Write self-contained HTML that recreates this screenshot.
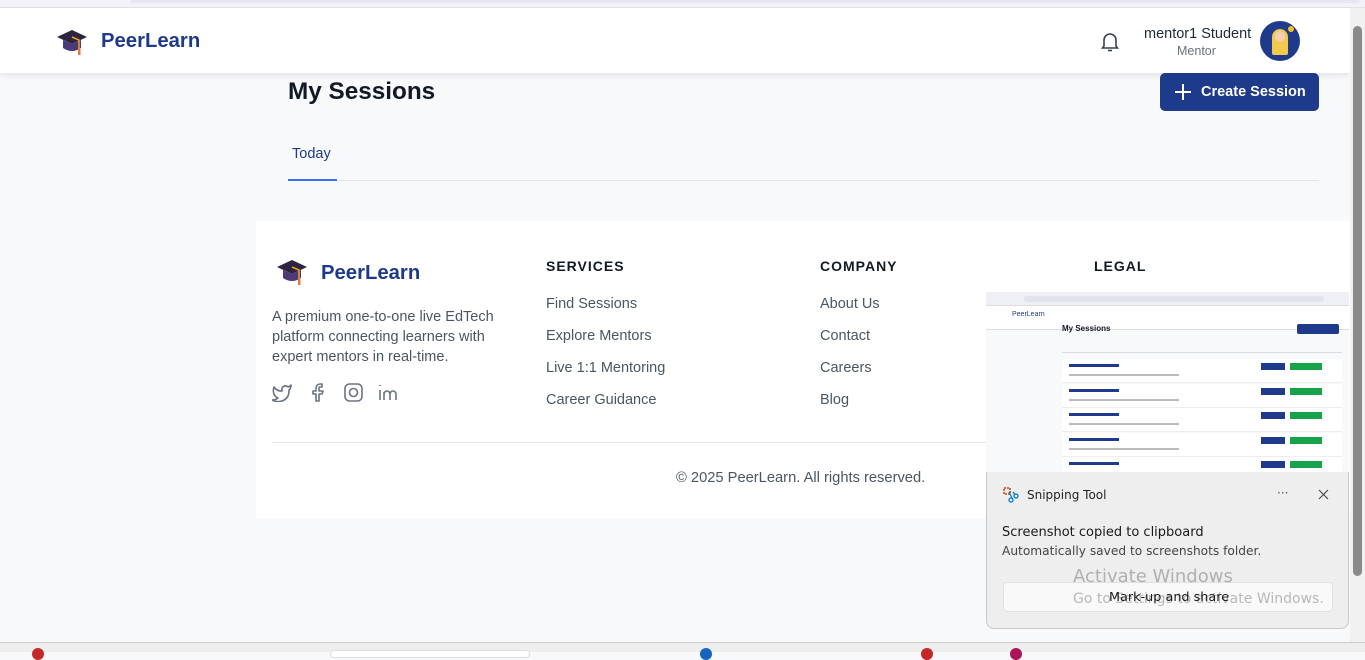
<!DOCTYPE html>
<html><head><meta charset="utf-8"><style>
*{margin:0;padding:0;box-sizing:border-box}
body{width:1365px;height:652px;overflow:hidden;background:#f8f9fb;font-family:"Liberation Sans",sans-serif;position:relative;color:#111827}
.abs{position:absolute}
.top{left:0;top:0;width:1365px;height:8px;background:#f3f3f7;border-bottom:1px solid #e2e2ea}
.top .pill{position:absolute;left:130px;top:0;width:1230px;height:3px;background:#e6e7f0;border-radius:0 0 6px 6px}
.hdr{left:0;top:8px;width:1350px;height:65px;background:#fff;box-shadow:0 3px 6px rgba(0,0,0,.08)}
.brand{color:#1e3a8a;font-weight:bold;font-size:20.3px}
.sb{left:1350px;top:8px;width:15px;height:634px;background:#f1f1f1}
.sb .th{position:absolute;left:3px;top:18px;width:9px;height:550px;background:#8a8a8a;border-radius:5px}
.foot{left:256px;top:221px;width:1094px;height:297px;background:#fff}
.fh{font-size:14px;font-weight:bold;letter-spacing:1px;color:#111827}
.fl{font-size:14.5px;color:#4b5563}
.task{left:0;top:642px;width:1365px;height:10px;background:#eeeeee;border-top:1px solid #ccc}
.toast{left:986px;top:472px;width:363px;height:157px;background:#eeeeee;border:1px solid #c8c8c8;border-top:none;border-radius:0 0 8px 8px;font-family:"DejaVu Sans","Liberation Sans",sans-serif}
.thumb{left:986px;top:292px;width:363px;height:180px;background:#f8f9fb;overflow:hidden}
.row{position:absolute;left:76px;width:280px;height:24px;background:#fff;border-bottom:1px solid #eee}
.row .t{position:absolute;left:7px;top:5px;width:50px;height:3px;background:#1e3a8a}
.row .b1{position:absolute;left:199px;top:4px;width:24px;height:7px;background:#1e3a8a}
.row .b2{position:absolute;left:228px;top:4px;width:32px;height:7px;background:#16a34a}
.row .s{position:absolute;left:7px;top:15px;width:110px;height:2px;background:#bbb}
</style></head><body>
<div class="abs top"><div class="pill"></div></div>
<div class="abs hdr">
  <svg class="abs" style="left:56px;top:20px" width="32" height="28" viewBox="0 0 32 28"><path d="M16 2 L31 9 L16 16 L1 9Z" fill="#2d2540"/><path d="M7 12 V20 Q16 26 25 20 V12 L16 16Z" fill="#4b3a78"/><path d="M16 9 L23 12 V22" stroke="#f0a020" stroke-width="1.5" fill="none"/><rect x="22" y="21" width="2.5" height="6" fill="#f07040"/></svg>
  <div class="abs brand" style="left:101px;top:22px">PeerLearn</div>
  <svg class="abs" style="left:1100px;top:23px" width="20" height="22" viewBox="0 0 20 22" fill="none" stroke="#374151" stroke-width="1.6"><path d="M4 15 V9 a6 6 0 0 1 12 0 V15 L17.5 17 H2.5Z"/><path d="M8 19.5 h4"/></svg>
  <div class="abs" style="left:1144px;top:18px;font-size:14.5px;color:#1f2937">mentor1 Student</div>
  <div class="abs" style="left:1177px;top:36px;font-size:12.5px;color:#6b7280">Mentor</div>
  <div class="abs" style="left:1260px;top:13px;width:40px;height:40px;border-radius:50%;background:#1e3a8a;overflow:hidden"><div style="position:absolute;left:12px;top:8px;width:16px;height:26px;background:#f2c94c;border-radius:8px 8px 2px 2px"></div><div style="position:absolute;left:15px;top:10px;width:10px;height:11px;background:#f5d0b0;border-radius:50%"></div><div style="position:absolute;left:28px;top:5px;width:6px;height:6px;background:#fbbf24;border-radius:50%"></div></div>
</div>
<div class="abs" style="left:288px;top:78px;font-size:24.3px;font-weight:bold;color:#111827">My Sessions</div>
<div class="abs" style="left:1160px;top:73px;width:159px;height:38px;background:#1e3a8a;border-radius:5px;color:#fff;font-size:14.5px;font-weight:bold;line-height:39px;padding-left:41px">Create Session</div>
<svg class="abs" style="left:1174px;top:83px" width="18" height="18" viewBox="0 0 18 18" stroke="#fff" stroke-width="2"><path d="M9 1V17M1 9H17"/></svg>
<div class="abs" style="left:292px;top:146px;font-size:14.5px;color:#1e3a8a">Today</div>
<div class="abs" style="left:288px;top:180px;width:1031px;height:1px;background:#e5e7eb"></div>
<div class="abs" style="left:288px;top:179px;width:49px;height:2px;background:#3b6ef5"></div>
<div class="abs foot">
  <svg class="abs" style="left:20px;top:37px" width="32" height="28" viewBox="0 0 32 28"><path d="M16 2 L31 9 L16 16 L1 9Z" fill="#2d2540"/><path d="M7 12 V20 Q16 26 25 20 V12 L16 16Z" fill="#4b3a78"/><path d="M16 9 L23 12 V22" stroke="#f0a020" stroke-width="1.5" fill="none"/><rect x="22" y="21" width="2.5" height="6" fill="#f07040"/></svg>
  <div class="abs brand" style="left:65px;top:41px">PeerLearn</div>
  <div class="abs fl" style="left:16px;top:86px;line-height:20px;width:250px">A premium one-to-one live EdTech platform connecting learners with expert mentors in real-time.</div>
  <svg class="abs" style="left:16px;top:161px" width="140" height="20" viewBox="0 0 140 20" fill="none" stroke="#6b7280" stroke-width="1.6" stroke-linejoin="round"><path d="M19 3 a8 8 0 0 1 -3 2 a3.5 3.5 0 0 0 -6 3 v1 a9 9 0 0 1 -8 -4 s-3 8 4 11 a10 10 0 0 1 -6 2 c8 4 17 0 17 -9 a4 4 0 0 0 0 -1 a6 6 0 0 0 2 -5z"/><path d="M50 2h-2a4 4 0 0 0-4 4v3h-3v3h3v7h3v-7h3l1-3h-4V6a1 1 0 0 1 1-1h2z"/><rect x="73" y="2" width="17" height="17" rx="4.5"/><circle cx="81.5" cy="10.5" r="4"/><path d="M108 8v10M108 3v1M112 18v-6a3 3 0 0 1 6 0v6M112 10v8" /><path d="M118 12a3 3 0 0 1 6 0v6"/></svg>
  <div class="abs fh" style="left:290px;top:37px">SERVICES</div>
  <div class="abs fl" style="left:290px;top:75px">Find Sessions</div>
  <div class="abs fl" style="left:290px;top:107px">Explore Mentors</div>
  <div class="abs fl" style="left:290px;top:139px">Live 1:1 Mentoring</div>
  <div class="abs fl" style="left:290px;top:171px">Career Guidance</div>
  <div class="abs fh" style="left:564px;top:37px">COMPANY</div>
  <div class="abs fl" style="left:564px;top:75px">About Us</div>
  <div class="abs fl" style="left:564px;top:107px">Contact</div>
  <div class="abs fl" style="left:564px;top:139px">Careers</div>
  <div class="abs fl" style="left:564px;top:171px">Blog</div>
  <div class="abs fh" style="left:838px;top:37px">LEGAL</div>
  <div class="abs" style="left:16px;top:221px;width:1062px;height:1px;background:#e5e7eb"></div>
  <div class="abs fl" style="left:420px;top:249px;font-size:14.7px">© 2025 PeerLearn. All rights reserved.</div>
</div>
<div class="abs thumb">
  <div class="abs" style="left:0;top:0;width:363px;height:14px;background:#eef0f6;border-bottom:1px solid #ddd"></div>
  <div class="abs" style="left:38px;top:4px;width:300px;height:6px;background:#e2e4ec;border-radius:3px"></div>
  <div class="abs" style="left:0;top:14px;width:363px;height:24px;background:#fff;border-bottom:1px solid #ddd"></div>
  <div class="abs" style="left:26px;top:19px;font-size:7px;color:#1e3a8a">PeerLearn</div>
  <div class="abs" style="left:76px;top:32px;font-size:8px;font-weight:bold">My Sessions</div>
  <div class="abs" style="left:311px;top:32px;width:42px;height:10px;background:#1e3a8a;border-radius:2px"></div>
  <div class="abs" style="left:76px;top:60px;width:280px;height:1px;background:#ddd"></div>
  <div class="row" style="top:67px"><div class="t"></div><div class="b1"></div><div class="b2"></div><div class="s"></div></div>
  <div class="row" style="top:92px"><div class="t"></div><div class="b1"></div><div class="b2"></div><div class="s"></div></div>
  <div class="row" style="top:116px"><div class="t"></div><div class="b1"></div><div class="b2"></div><div class="s"></div></div>
  <div class="row" style="top:141px"><div class="t"></div><div class="b1"></div><div class="b2"></div><div class="s"></div></div>
  <div class="row" style="top:165px"><div class="t"></div><div class="b1"></div><div class="b2"></div><div class="s"></div></div>
</div>
<div class="abs toast">
  <svg class="abs" style="left:16px;top:15px" width="16" height="16" viewBox="0 0 16 16"><rect x="1" y="1" width="6" height="6" fill="none" stroke="#d83b01" stroke-width="1.5" stroke-dasharray="2 1"/><circle cx="8" cy="13" r="2" fill="none" stroke="#0078d4" stroke-width="1.3"/><circle cx="13" cy="9" r="2" fill="none" stroke="#0078d4" stroke-width="1.3"/><path d="M6 5 L9 11 M10 5 L12 8" stroke="#0078d4" stroke-width="1.3"/></svg>
  <div class="abs" style="left:40px;top:16px;font-size:12px;color:#222">Snipping Tool</div>
  <div class="abs" style="left:290px;top:14px;font-size:12px;color:#555">···</div>
  <svg class="abs" style="left:331px;top:17px" width="11" height="11" viewBox="0 0 11 11" stroke="#444" stroke-width="1.1"><path d="M1 1L10 10M10 1L1 10"/></svg>
  <div class="abs" style="left:15px;top:53px;font-size:13px;color:#1a1a1a">Screenshot copied to clipboard</div>
  <div class="abs" style="left:15px;top:72px;font-size:12.2px;color:#444">Automatically saved to screenshots folder.</div>
  <div class="abs" style="left:16px;top:110px;width:330px;height:30px;background:#f9f9f9;border:1px solid #e0e0e0;border-radius:4px"></div>
  <div class="abs" style="left:86px;top:94px;font-size:18px;color:#b0b0b0">Activate Windows</div>
  <div class="abs" style="left:86px;top:119px;font-size:14px;color:#b8b8b8">Go to Settings to activate Windows.</div>
  <div class="abs" style="left:122px;top:118px;font-size:12.8px;color:#1a1a1a">Mark-up and share</div>
</div>
<div class="abs sb"><div class="th"></div></div>
<div class="abs task">
  <div class="abs" style="left:32px;top:5px;width:12px;height:12px;border-radius:50%;background:#c62828"></div>
  <div class="abs" style="left:330px;top:7px;width:200px;height:8px;background:#fff;border:1px solid #ddd;border-radius:4px"></div>
  <div class="abs" style="left:700px;top:5px;width:12px;height:12px;border-radius:50%;background:#1565c0"></div>
  <div class="abs" style="left:921px;top:5px;width:12px;height:12px;border-radius:50%;background:#c62828"></div>
  <div class="abs" style="left:1010px;top:5px;width:12px;height:12px;border-radius:50%;background:#ad1457"></div>
</div>
</body></html>
